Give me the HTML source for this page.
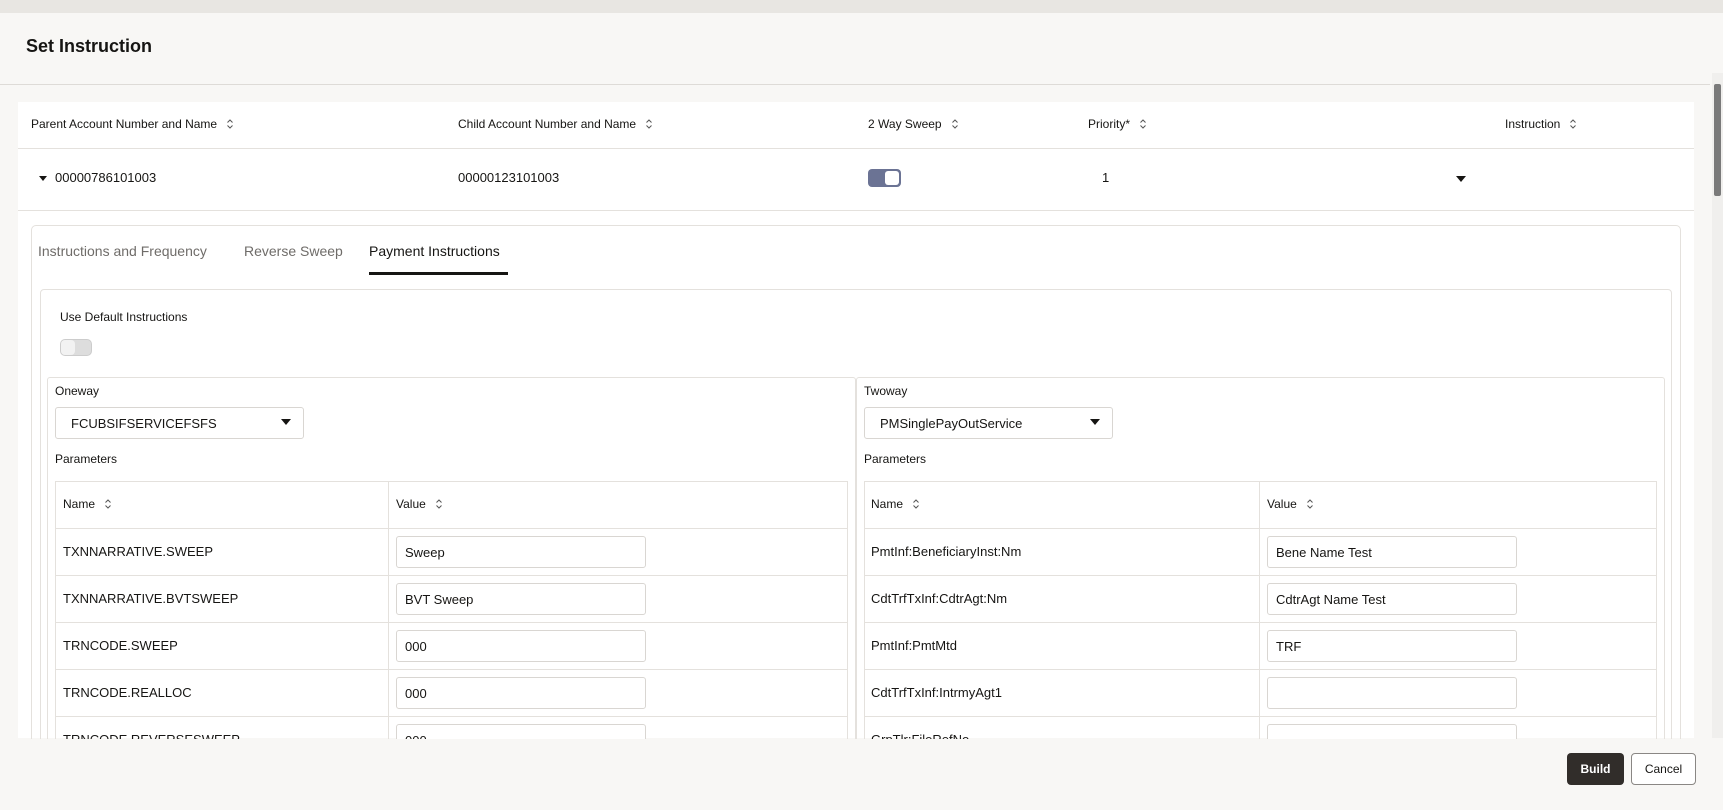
<!DOCTYPE html>
<html><head><meta charset="utf-8"><style>
*{box-sizing:border-box;margin:0;padding:0}
body{width:1723px;height:810px;overflow:hidden;background:#f8f7f5;font-family:"Liberation Sans",sans-serif;color:#161513;position:relative}
.a{position:absolute}
.t{font-size:13px;white-space:nowrap}
.s{font-size:12px;white-space:nowrap}
.sort{display:inline-block;margin-left:9px;vertical-align:-2px}
.inp{position:absolute;background:#fff;border:1px solid #d9d6d2;border-radius:3px;height:32px;font-size:13px;padding:8px 8px;white-space:nowrap}
.car{position:absolute;width:0;height:0;border-left:5px solid transparent;border-right:5px solid transparent;border-top:6px solid #161513}
.hl{position:absolute;height:1px;background:#e4e1dd}
.vl{position:absolute;width:1px;background:#e4e1dd}
</style></head><body>
<svg width="0" height="0" style="position:absolute"><symbol id="so" viewBox="0 0 8 12"><path d="M1.5 4.5 L4 2 L6.5 4.5 M1.5 7.5 L4 10 L6.5 7.5" fill="none" stroke="#555" stroke-width="1"/></symbol></svg>
<div class="a" style="left:0;top:0;width:1723px;height:13px;background:#e8e6e2"></div>
<div class="a" style="left:26px;top:36px;font-size:18px;font-weight:bold">Set Instruction</div>
<div class="a" style="left:0;top:84px;width:1710px;height:1px;background:#dedbd7"></div>
<div class="a" style="left:1712px;top:73px;width:11px;height:665px;background:#f0efed"></div>
<div class="a" style="left:1714px;top:84px;width:7px;height:112px;background:#7a7a7a;border-radius:2px"></div>
<div class="a" style="left:18px;top:102px;width:1676px;height:636px;background:#fff"></div>
<div class="hl" style="left:18px;top:148px;width:1676px"></div>
<div class="hl" style="left:18px;top:210px;width:1676px"></div>
<div class="a s" style="left:31px;top:117px">Parent Account Number and Name<svg class="sort" width="8" height="12"><use href="#so"/></svg></div>
<div class="a s" style="left:458px;top:117px">Child Account Number and Name<svg class="sort" width="8" height="12"><use href="#so"/></svg></div>
<div class="a s" style="left:868px;top:117px">2 Way Sweep<svg class="sort" width="8" height="12"><use href="#so"/></svg></div>
<div class="a s" style="left:1088px;top:117px">Priority*<svg class="sort" width="8" height="12"><use href="#so"/></svg></div>
<div class="a s" style="left:1505px;top:117px">Instruction<svg class="sort" width="8" height="12"><use href="#so"/></svg></div>
<div class="car" style="left:39px;top:176px;border-width:5px 4px 0 4px"></div>
<div class="a t" style="left:55px;top:170px">00000786101003</div>
<div class="a t" style="left:458px;top:170px">00000123101003</div>
<div class="a" style="left:868px;top:169px;width:33px;height:18px;background:#6b7394;border-radius:4px"></div>
<div class="a" style="left:885px;top:171px;width:14px;height:14px;background:#fff;border-radius:3px"></div>
<div class="a t" style="left:1102px;top:170px">1</div>
<div class="car" style="left:1456px;top:176px"></div>
<div class="a" style="left:31px;top:225px;width:1650px;height:540px;border:1px solid #e4e1dd;border-radius:5px"></div>
<div class="a" style="left:38px;top:243px;font-size:14px;color:#6f6c69">Instructions and Frequency</div>
<div class="a" style="left:244px;top:243px;font-size:14px;color:#6f6c69">Reverse Sweep</div>
<div class="a" style="left:369px;top:243px;font-size:14px">Payment Instructions</div>
<div class="a" style="left:369px;top:272px;width:139px;height:3px;background:#161513"></div>
<div class="a" style="left:40px;top:289px;width:1632px;height:500px;border:1px solid #e4e1dd;border-radius:4px"></div>
<div class="a s" style="left:60px;top:310px">Use Default Instructions</div>
<div class="a" style="left:60px;top:339px;width:32px;height:17px;background:#ddd;border-radius:5px;border:1px solid #ccc"></div>
<div class="a" style="left:61px;top:340px;width:14px;height:15px;background:#f2f2f2;border-radius:4px"></div>
<div class="a" style="left:47px;top:377px;width:809px;height:420px;border:1px solid #e4e1dd;border-radius:3px"></div>
<div class="a" style="left:856px;top:377px;width:809px;height:420px;border:1px solid #e4e1dd;border-radius:3px"></div>
<div class="a s" style="left:55px;top:384px">Oneway</div>
<div class="a s" style="left:864px;top:384px">Twoway</div>
<div class="inp" style="left:55px;top:407px;width:249px;height:32px;padding-left:15px">FCUBSIFSERVICEFSFS</div>
<div class="car" style="left:281px;top:419px"></div>
<div class="inp" style="left:864px;top:407px;width:249px;height:32px;padding-left:15px">PMSinglePayOutService</div>
<div class="car" style="left:1090px;top:419px"></div>
<div class="a s" style="left:55px;top:452px">Parameters</div>
<div class="a s" style="left:864px;top:452px">Parameters</div>
<div class="a" style="left:55px;top:481px;width:793px;height:300px;border:1px solid #e4e1dd;border-bottom:none"></div>
<div class="vl" style="left:388px;top:481px;height:260px"></div>
<div class="a" style="left:864px;top:481px;width:793px;height:300px;border:1px solid #e4e1dd;border-bottom:none"></div>
<div class="vl" style="left:1259px;top:481px;height:260px"></div>
<div class="hl" style="left:55px;top:528px;width:793px"></div>
<div class="hl" style="left:55px;top:575px;width:793px"></div>
<div class="hl" style="left:55px;top:622px;width:793px"></div>
<div class="hl" style="left:55px;top:669px;width:793px"></div>
<div class="hl" style="left:55px;top:716px;width:793px"></div>
<div class="hl" style="left:864px;top:528px;width:793px"></div>
<div class="hl" style="left:864px;top:575px;width:793px"></div>
<div class="hl" style="left:864px;top:622px;width:793px"></div>
<div class="hl" style="left:864px;top:669px;width:793px"></div>
<div class="hl" style="left:864px;top:716px;width:793px"></div>
<div class="a s" style="left:63px;top:497px">Name<svg class="sort" width="8" height="12"><use href="#so"/></svg></div>
<div class="a s" style="left:396px;top:497px">Value<svg class="sort" width="8" height="12"><use href="#so"/></svg></div>
<div class="a s" style="left:871px;top:497px">Name<svg class="sort" width="8" height="12"><use href="#so"/></svg></div>
<div class="a s" style="left:1267px;top:497px">Value<svg class="sort" width="8" height="12"><use href="#so"/></svg></div>
<div class="a t" style="left:63px;top:544px">TXNNARRATIVE.SWEEP</div>
<div class="a t" style="left:63px;top:591px">TXNNARRATIVE.BVTSWEEP</div>
<div class="a t" style="left:63px;top:638px">TRNCODE.SWEEP</div>
<div class="a t" style="left:63px;top:685px">TRNCODE.REALLOC</div>
<div class="a t" style="left:63px;top:732px">TRNCODE.REVERSESWEEP</div>
<div class="inp" style="left:396px;top:536px;width:250px">Sweep</div>
<div class="inp" style="left:396px;top:583px;width:250px">BVT Sweep</div>
<div class="inp" style="left:396px;top:630px;width:250px">000</div>
<div class="inp" style="left:396px;top:677px;width:250px">000</div>
<div class="inp" style="left:396px;top:724px;width:250px">000</div>
<div class="a t" style="left:871px;top:544px">PmtInf:BeneficiaryInst:Nm</div>
<div class="a t" style="left:871px;top:591px">CdtTrfTxInf:CdtrAgt:Nm</div>
<div class="a t" style="left:871px;top:638px">PmtInf:PmtMtd</div>
<div class="a t" style="left:871px;top:685px">CdtTrfTxInf:IntrmyAgt1</div>
<div class="a t" style="left:871px;top:732px">GrpTlr:FileRefNo</div>
<div class="inp" style="left:1267px;top:536px;width:250px">Bene Name Test</div>
<div class="inp" style="left:1267px;top:583px;width:250px">CdtrAgt Name Test</div>
<div class="inp" style="left:1267px;top:630px;width:250px">TRF</div>
<div class="inp" style="left:1267px;top:677px;width:250px"></div>
<div class="inp" style="left:1267px;top:724px;width:250px"></div>
<div class="a" style="left:0;top:739px;width:1723px;height:71px;background:#f8f7f5"></div>
<div class="a" style="left:1567px;top:753px;width:57px;height:32px;background:#312d2a;color:#fff;border-radius:4px;font-size:12px;font-weight:bold;text-align:center;line-height:32px">Build</div>
<div class="a" style="left:1631px;top:753px;width:65px;height:32px;background:#fff;border:1px solid #8a8784;border-radius:4px;font-size:12px;text-align:center;line-height:30px">Cancel</div>
</body></html>
